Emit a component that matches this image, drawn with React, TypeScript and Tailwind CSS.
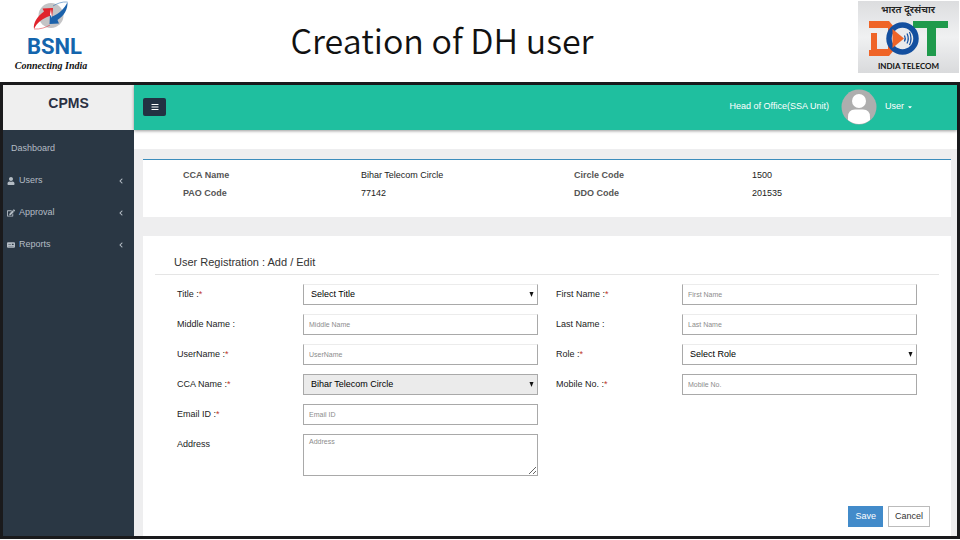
import type { ReactNode } from 'react';
import { FaBars, FaCaretDown, FaChevronLeft, FaEdit, FaUser } from 'react-icons/fa';
import { FaMoneyCheck } from 'react-icons/fa6';

type FieldProps = {
  id: string;
  label: string;
  required?: boolean;
  children: ReactNode;
};

type ControlProps = {
  id: string;
  label: string;
  required?: boolean;
  softTop?: boolean;
};

const controlClass = 'w-full border border-[#a9a9a9] text-black placeholder:text-[#8c8c8c]';

const menu = [
  { label: 'Users', icon: FaUser },
  { label: 'Approval', icon: FaEdit },
  { label: 'Reports', icon: FaMoneyCheck },
];

const BsnlLogo = () => (
  <svg viewBox="0 0 92 76" className="h-[76px] w-[92px]" role="img" aria-label="BSNL">
    <circle cx="51" cy="15.500" r="12.500" fill="#c4c4c6" />
    <path d="M34 29C33 23 37 16.500 44 11.500L42.500 8.500L53 8L52 18L49.500 16C42.500 18.500 37 22.500 34 29Z" fill="#e0232c" />
    <path d="M67.500 2C68 9 64 16 57.500 20L59 23.500L49.500 24L50 14.500L52.500 16.500C59 13.500 64.500 9 67.500 2Z" fill="#1b62ab" />
    <path d="M51 9L52 18L50 14.500Z" fill="#fff" />
    <path d="M34 29C40 29.500 46 27.500 50 25" fill="none" stroke="#e0232c" strokeWidth="0.500" />
    <path d="M67.500 2C62 1.500 57 3.500 53 6" fill="none" stroke="#1b62ab" strokeWidth="0.500" />
    <text x="54.500" y="54" textAnchor="middle" fontSize="22" fontWeight="700" fill="#1465ad" fontFamily="Roboto, sans-serif">
      BSNL
    </text>
    <text x="51" y="69" textAnchor="middle" fontSize="10" fontStyle="italic" fontWeight="700" fill="#111" fontFamily="'Liberation Serif', serif">
      Connecting India
    </text>
  </svg>
);

const DotLogo = () => (
  <svg viewBox="0 0 101 72" className="h-[72px] w-[101px]" role="img" aria-label="DOT India Telecom">
    <defs>
      <linearGradient id="plate" x1="0" y1="0" x2="0" y2="1">
        <stop offset="0" stopColor="#dcdddf" />
        <stop offset="0.500" stopColor="#f0f1f2" />
        <stop offset="1" stopColor="#d9dadc" />
      </linearGradient>
    </defs>
    <rect width="101" height="72" fill="url(#plate)" />
    <text x="50" y="12" textAnchor="middle" fontSize="10" fontWeight="600" fill="#222" fontFamily="'Noto Sans', 'Noto Sans Devanagari', sans-serif">
      भारत दूरसंचार
    </text>
    <path d="M11 20H31L36 26V49L31 55H11V49H13V32H19V48H30V27H11Z" fill="#ef6427" />
    <path d="M55 20H90V27H78V55H69V27H55Z" fill="#1f9a4c" />
    <circle cx="44.500" cy="37.500" r="13.500" fill="#e9eaec" stroke="#134f9f" strokeWidth="5.500" />
    <path d="M34.500 28L46 37.500L34.500 47Z" fill="#ef6427" />
    <path d="M46.500 34.500Q48 37.500 46.500 40.500M49 32.500Q51.500 37.500 49 42.500M51.500 31Q54.500 37.500 51.500 44" fill="none" stroke="#134f9f" strokeWidth="1.200" />
    <text x="50.500" y="68" textAnchor="middle" fontSize="8" fontWeight="700" fill="#111" fontFamily="Lato, sans-serif">
      INDIA TELECOM
    </text>
  </svg>
);

const Avatar = () => (
  <svg viewBox="0 0 36 36" className="size-9" aria-hidden="true">
    <circle cx="18" cy="18" r="17.500" fill="#aeaeae" />
    <circle cx="18" cy="12" r="7" fill="#fff" />
    <path d="M7 31V28Q7 20.500 14 20.500H22Q29 20.500 29 28V31Q24 35 18 35T7 31Z" fill="#fff" />
  </svg>
);

const Field = ({ id, label, required, children }: FieldProps) => (
  <div className="grid grid-cols-[126px_1fr] items-start">
    <label htmlFor={id} className="leading-[21px] text-[#222]">
      {label}
      {required && <span className="text-[#c0392b]">*</span>}
    </label>
    {children}
  </div>
);

const TextField = ({ id, label, hint, required, softTop }: ControlProps & { hint: string }) => (
  <Field id={id} label={label} required={required}>
    <input
      id={id}
      type="text"
      placeholder={hint}
      className={`${controlClass} h-[21px] bg-white px-[5px] text-[7px] ${softTop ? 'border-t-[#ececec]' : ''}`}
    />
  </Field>
);

const SelectField = ({ id, label, option, disabled, softTop }: ControlProps & { option: string; disabled?: boolean }) => (
  <Field id={id} label={label} required>
    <div className="relative">
      <select
        id={id}
        disabled={disabled}
        className={`${controlClass} block h-[21px] appearance-none bg-white px-[7px] text-[9px] disabled:bg-[#ebebeb] disabled:opacity-100 ${softTop ? 'border-t-[#ececec]' : ''}`}
      >
        <option>{option}</option>
      </select>
      <svg viewBox="0 0 5 5" className="pointer-events-none absolute top-2 right-1 size-[5px]" aria-hidden="true">
        <path d="M0.500 0H4.500L2.500 5Z" fill="#111" />
      </svg>
    </div>
  </Field>
);

const Sidebar = () => (
  <aside className="flex w-[131px] shrink-0 flex-col bg-[#2a3744]">
    <div className="flex h-[45px] items-center justify-center bg-[#efefef] pb-2 text-[14px] font-bold text-[#2a3042]">CPMS</div>
    <nav className="pt-[3px] text-[9px] text-[#b4bcc4]">
      <a href="#dashboard" className="flex h-8 items-center px-2">
        Dashboard
      </a>
      {menu.map(({ label, icon: Icon }) => (
        <a key={label} href={`#${label.toLowerCase()}`} className="flex h-8 items-center gap-1 pr-[10px] pl-1">
          <Icon className="size-2" />
          {label}
          <FaChevronLeft className="ml-auto size-[6px]" />
        </a>
      ))}
    </nav>
  </aside>
);

const TopBar = () => (
  <header className="relative flex h-[45px] items-center bg-[#1fbf9f] pr-11 pb-[2px] pl-[9px] text-[9px] text-white shadow-[0_1px_3px_rgba(0,0,0,0.4)]">
    <button type="button" aria-label="Toggle menu" className="flex h-[18px] w-[23px] items-center justify-center rounded-xs bg-[#233143]">
      <FaBars className="size-2" />
    </button>
    <span className="mr-3 ml-auto">Head of Office(SSA Unit)</span>
    <Avatar />
    <button type="button" className="ml-2 flex items-center gap-[3px]">
      User
      <FaCaretDown className="size-[6px]" />
    </button>
  </header>
);

const OfficeInfo = () => (
  <dl className="grid h-[58px] grid-cols-[178fr_213fr_178fr_199fr] content-start border-t border-[#3c8dbc] bg-white pt-[6px] pl-10 text-[9px] leading-[18px] text-[#222]">
    <dt className="font-bold text-[#555]">CCA Name</dt>
    <dd>Bihar Telecom Circle</dd>
    <dt className="font-bold text-[#555]">Circle Code</dt>
    <dd>1500</dd>
    <dt className="font-bold text-[#555]">PAO Code</dt>
    <dd>77142</dd>
    <dt className="font-bold text-[#555]">DDO Code</dt>
    <dd>201535</dd>
  </dl>
);

const RegistrationForm = () => (
  <form className="mt-[19px] flex-1 bg-white px-3 pt-[17px] text-[9px]">
    <h2 className="border-b border-[#e5e5e5] pb-[3px] pl-[19px] text-[11px] leading-[18px] text-[#333]">User Registration : Add / Edit</h2>
    <div className="grid grid-cols-2 gap-x-[18px] gap-y-[9px] px-[22px] pt-[9px]">
      <SelectField id="title" label="Title :" option="Select Title" softTop />
      <TextField id="first" label="First Name :" hint="First Name" required softTop />
      <TextField id="middle" label="Middle Name :" hint="Middle Name" softTop />
      <TextField id="last" label="Last Name :" hint="Last Name" softTop />
      <TextField id="username" label="UserName :" hint="UserName" required softTop />
      <SelectField id="role" label="Role :" option="Select Role" softTop />
      <SelectField id="cca" label="CCA Name :" option="Bihar Telecom Circle" disabled />
      <TextField id="mobile" label="Mobile No. :" hint="Mobile No." required />
      <div className="col-span-2 grid grid-cols-2 gap-x-[18px]">
        <TextField id="email" label="Email ID :" hint="Email ID" required />
      </div>
      <Field id="address" label="Address">
        <textarea id="address" placeholder="Address" className={`${controlClass} block h-[42px] bg-white px-[5px] py-[2px] text-[7px]`} />
      </Field>
    </div>
    <div className="mt-[30px] flex justify-end gap-[5px] pr-[9px]">
      <button type="submit" className="h-[21px] border border-[#428bca] bg-[#428bca] px-[6px] text-white">
        Save
      </button>
      <button type="button" className="h-[21px] border border-[#bbb] bg-white px-[6px] text-[#333]">
        Cancel
      </button>
    </div>
  </form>
);

export default function App() {
  return (
    <div className="flex min-h-screen flex-col bg-white pb-px font-['Liberation_Sans',Arial,sans-serif]">
      <div className="flex h-[82px] items-start pr-px">
        <BsnlLogo />
        <h1 className="flex-1 pt-3 pr-[66px] text-center font-['Noto_Sans_CJK_SC',sans-serif] text-[34px] leading-[56px] font-[350] text-[#111]">
          Creation of DH user
        </h1>
        <div className="pt-px">
          <DotLogo />
        </div>
      </div>
      <div className="flex flex-1 border-3 border-[#1a1a1c] bg-[#eeeeef]">
        <Sidebar />
        <div className="flex flex-1 flex-col">
          <TopBar />
          <div className="h-[19px] bg-white" />
          <main className="flex flex-1 flex-col pt-[10px] pr-[6px] pl-[9px]">
            <OfficeInfo />
            <RegistrationForm />
          </main>
        </div>
      </div>
    </div>
  );
}
